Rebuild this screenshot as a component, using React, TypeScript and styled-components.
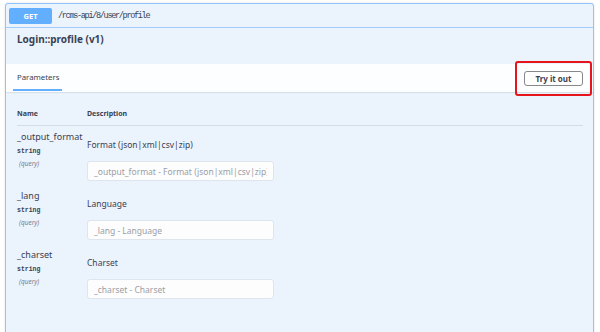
import React from "react";
import styled, { createGlobalStyle } from "styled-components";

const GlobalStyle = createGlobalStyle`
  body {
    margin: 0;
    background: #ffffff;
    font-family: "Noto Sans", "Open Sans", sans-serif;
    color: #3b4151;
    overflow: hidden;
  }
`;

const Page = styled.div`
  padding: 3px 0 0 5px;
  width: 600px;
  height: 332px;
  box-sizing: border-box;
`;

const OpBlock = styled.section`
  position: relative;
  width: 589px;
  height: 340px;
  box-sizing: border-box;
  border: 1px solid #8fc5fb;
  border-radius: 3px;
  background: #ebf3fd;
  box-shadow: 0 0 2px rgba(0, 0, 0, 0.15);
`;

const Summary = styled.div`
  display: flex;
  align-items: center;
  gap: 6px;
  height: 23px;
  padding: 0 3px;
  border-bottom: 1px solid #9fcdfb;
`;

const MethodBadge = styled.span`
  display: flex;
  align-items: center;
  justify-content: center;
  width: 43px;
  height: 16px;
  border-radius: 2px;
  background: #61affe;
  color: #ffffff;
  font-size: 7.5px;
  font-weight: 700;
`;

const Path = styled.span`
  font-family: "Liberation Mono", "DejaVu Sans Mono", monospace;
  font-size: 8.5px;
  letter-spacing: -1.3px;
  color: #3b4151;
`;

const Description = styled.div`
  height: 36px;
  box-sizing: border-box;
  padding: 4px 11px 0;
  font-size: 10px;
  font-weight: 700;
  line-height: 14px;
`;

const TabBar = styled.div`
  display: flex;
  align-items: stretch;
  justify-content: space-between;
  height: 28px;
  padding: 0 10px 0 7px;
  background: rgba(255, 255, 255, 0.85);
  box-shadow: 0 1px 1px rgba(0, 0, 0, 0.08);
`;

const Tab = styled.div<{ $active?: boolean }>`
  display: flex;
  align-items: center;
  padding: 0 4px;
  width: 49px;
  box-sizing: border-box;
  font-size: 7.8px;
  color: #3b4151;
  border-bottom: 2px solid ${(p) => (p.$active ? "#61affe" : "transparent")};
  margin-bottom: 1px;
`;

const TryButton = styled.button`
  align-self: center;
  width: 59px;
  height: 15px;
  padding: 0;
  border: 1.5px solid #888888;
  border-radius: 3px;
  background: #ffffff;
  color: #3b4151;
  font-family: "Noto Sans", "Open Sans", sans-serif;
  font-size: 8px;
  font-weight: 700;
`;

const Highlight = styled.div`
  position: absolute;
  left: 509px;
  top: 57px;
  width: 77px;
  height: 35px;
  box-sizing: border-box;
  border: 2px solid #e8141b;
  border-radius: 3px;
  pointer-events: none;
`;

const Table = styled.div`
  padding: 0 10px 0 11px;
`;

const HeaderRow = styled.div`
  display: grid;
  grid-template-columns: 70px 1fr;
  padding: 16px 0 5px;
  border-bottom: 1px solid #d3dbe6;
  font-size: 7px;
  font-weight: 700;
  line-height: 12px;
`;

const Body = styled.div`
  padding-top: 4px;
`;

const ParamRow = styled.div`
  display: grid;
  grid-template-columns: 70px 1fr;
  height: 59px;
`;

const NameCell = styled.div`
  display: flex;
  flex-direction: column;
`;

const ParamName = styled.div`
  font-size: 9px;
  line-height: 14px;
`;

const ParamType = styled.div`
  margin-top: 2px;
  font-family: "Liberation Mono", "DejaVu Sans Mono", monospace;
  font-size: 6.5px;
  font-weight: 700;
  line-height: 12px;
`;

const ParamIn = styled.div`
  padding-left: 2px;
  font-size: 6.5px;
  font-style: italic;
  line-height: 12px;
  color: #7a808c;
`;

const DescCell = styled.div`
  display: flex;
  flex-direction: column;
  padding-top: 9px;
`;

const DescText = styled.div`
  font-size: 8.5px;
  line-height: 12px;
`;

const Input = styled.input`
  margin-top: 10px;
  width: 187px;
  height: 20px;
  box-sizing: border-box;
  padding: 0 6px;
  border: 1px solid #dfe5ec;
  border-radius: 3px;
  background: #fdfdfd;
  font-family: "Noto Sans", "Open Sans", sans-serif;
  font-size: 8.5px;
  color: #3b4151;
  outline: none;
  &::placeholder {
    color: #9a9ea6;
  }
`;

const params = [
  { name: "_output_format", desc: "Format (json|xml|csv|zip)" },
  { name: "_lang", desc: "Language" },
  { name: "_charset", desc: "Charset" },
];

export default function App() {
  return (
    <>
      <GlobalStyle />
      <Page>
        <OpBlock>
          <Summary>
            <MethodBadge>GET</MethodBadge>
            <Path>/rcms-api/8/user/profile</Path>
          </Summary>
          <Description>Login::profile (v1)</Description>
          <TabBar>
            <Tab $active>Parameters</Tab>
            <TryButton>Try it out</TryButton>
          </TabBar>
          <Table>
            <HeaderRow>
              <div>Name</div>
              <div>Description</div>
            </HeaderRow>
            <Body>
              {params.map((p) => (
                <ParamRow key={p.name}>
                  <NameCell>
                    <ParamName>{p.name}</ParamName>
                    <ParamType>string</ParamType>
                    <ParamIn>(query)</ParamIn>
                  </NameCell>
                  <DescCell>
                    <DescText>{p.desc}</DescText>
                    <Input placeholder={`${p.name} - ${p.desc}`} />
                  </DescCell>
                </ParamRow>
              ))}
            </Body>
          </Table>
          <Highlight />
        </OpBlock>
      </Page>
    </>
  );
}
